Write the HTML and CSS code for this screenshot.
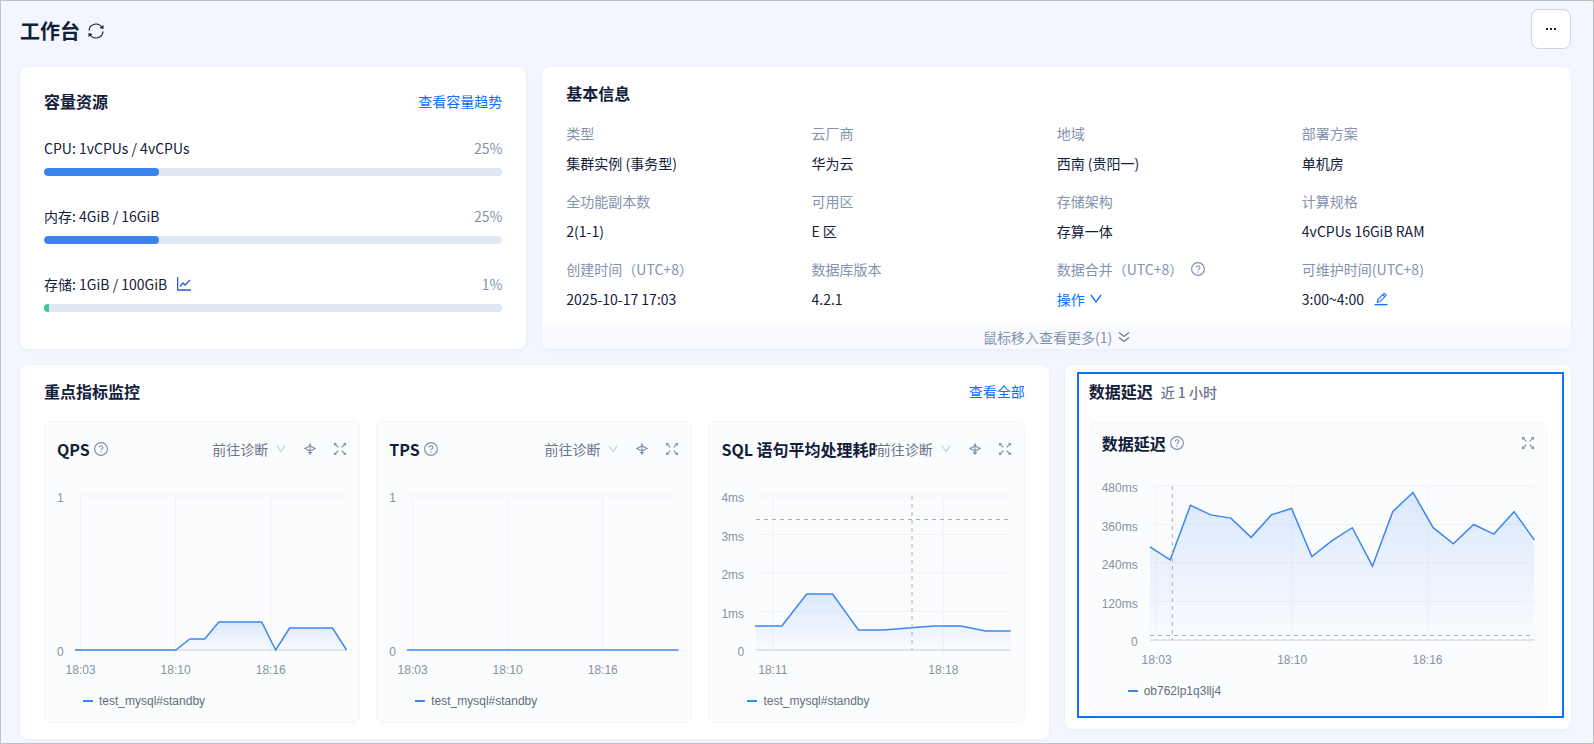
FILE: index.html
```
<!DOCTYPE html>
<html lang="zh-CN">
<head>
	<meta charset="UTF-8">
	<meta name="viewport" content="width=device-width, initial-scale=1">
	<title>工作台</title>
	<link rel="stylesheet" href="styles.css">
</head>
<body>
<svg class="sprite" aria-hidden="true">
	<symbol id="i-help" viewBox="0 0 14 14">
		<circle cx="7" cy="7" r="6.4" fill="none" stroke="currentColor" stroke-width="1.2"/>
		<path d="M5.1 5.6c0-1.1.8-1.8 1.9-1.8s1.9.7 1.9 1.7c0 .8-.5 1.2-1.1 1.5-.6.3-.8.6-.8 1.2" fill="none" stroke="currentColor" stroke-width="1.1"/>
		<circle cx="7" cy="10" r=".7" fill="currentColor"/>
	</symbol>
	<symbol id="i-down" viewBox="0 0 12 12">
		<path d="M1 2l5 7 5-7" fill="none" stroke="currentColor" stroke-width="1.3"/>
	</symbol>
	<symbol id="i-full" viewBox="0 0 12 12">
		<path d="M1 1l3.400 3.400M11 1L7.600 4.400M1 11l3.400-3.400M11 11L7.600 7.600" fill="none" stroke="currentColor" stroke-width="1.2"/>
		<path d="M0 0h3L0 3zM12 0v3L9 0zM0 12V9l3 3zM12 12H9l3-3z" fill="currentColor"/>
	</symbol>
	<symbol id="i-link" viewBox="0 0 12 12">
		<path d="M6 1v9M6 3L1 5.500 6 8l5-2.500z" fill="none" stroke="currentColor" stroke-width="1.2"/>
		<path d="M4.500 2.500L6 0l1.500 2.500zM3.500 9h5L6 12z" fill="currentColor"/>
	</symbol>
	<linearGradient id="area" x1="0" y1="0" x2="0" y2="1">
		<stop offset="0" stop-color="#3d86f0" stop-opacity=".17"/>
		<stop offset="1" stop-color="#3d86f0" stop-opacity=".01"/>
	</linearGradient>
</svg>

<main class="page">
	<header class="header">
		<h1>工作台</h1>
		<button class="icon-btn" type="button" aria-label="刷新">
			<svg width="16" height="16" viewBox="0 0 16 16">
				<path d="M1 7.500A7 7 0 0 1 14 4.500M15 8.500A7 7 0 0 1 2 11.500" fill="none" stroke="currentColor" stroke-width="1.2"/>
				<path d="M15.500 2v4l-4-1zM.5 14v-4l4 1z" fill="currentColor"/>
			</svg>
		</button>
		<button class="more" type="button" aria-label="更多">
			<svg width="12" height="4" viewBox="0 0 12 4"><path d="M1 1h2v2H1zM5 1h2v2H5zM9 1h2v2H9z" fill="currentColor"/></svg>
		</button>
	</header>

	<div class="grid">
		<section class="card capacity">
			<div class="card-head">
				<h2>容量资源</h2>
				<a href="#">查看容量趋势</a>
			</div>
			<div class="usage">
				<div class="usage-text"><span>CPU: 1vCPUs / 4vCPUs</span><span class="percent">25%</span></div>
				<div class="bar"><div class="fill" style="width:25%"></div></div>
			</div>
			<div class="usage">
				<div class="usage-text"><span>内存: 4GiB / 16GiB</span><span class="percent">25%</span></div>
				<div class="bar"><div class="fill" style="width:25%"></div></div>
			</div>
			<div class="usage">
				<div class="usage-text">
					<span>存储: 1GiB / 100GiB</span>
					<button class="icon-btn trend" type="button" aria-label="存储趋势">
						<svg width="14" height="14" viewBox="0 0 14 14"><path d="M.6 0v13H14M3 9.500l3-3.500 2 2 5-5" fill="none" stroke="currentColor" stroke-width="1.3"/></svg>
					</button>
					<span class="percent">1%</span>
				</div>
				<div class="bar"><div class="fill low" style="width:1%"></div></div>
			</div>
		</section>

		<section class="card info wide">
			<div class="card-head"><h2>基本信息</h2></div>
			<dl class="info-list">
				<div><dt>类型</dt><dd>集群实例 (事务型)</dd></div>
				<div><dt>云厂商</dt><dd>华为云</dd></div>
				<div><dt>地域</dt><dd>西南 (贵阳一)</dd></div>
				<div><dt>部署方案</dt><dd>单机房</dd></div>
				<div><dt>全功能副本数</dt><dd>2(1-1)</dd></div>
				<div><dt>可用区</dt><dd>E 区</dd></div>
				<div><dt>存储架构</dt><dd>存算一体</dd></div>
				<div><dt>计算规格</dt><dd>4vCPUs 16GiB RAM</dd></div>
				<div><dt>创建时间（UTC+8）</dt><dd>2025-10-17 17:03</dd></div>
				<div><dt>数据库版本</dt><dd>4.2.1</dd></div>
				<div>
					<dt>数据合并（UTC+8）<svg class="help" width="14" height="14"><use href="#i-help"/></svg></dt>
					<dd><button class="action" type="button">操作<svg width="12" height="12"><use href="#i-down"/></svg></button></dd>
				</div>
				<div>
					<dt>可维护时间(UTC+8)</dt>
					<dd>3:00~4:00
						<button class="icon-btn edit" type="button" aria-label="编辑可维护时间">
							<svg width="14" height="14" viewBox="0 0 14 14"><path d="M3.400 10.200l.5-2.700 6.200-6.300 2.100 2.100L6 9.600zM8.700 2.700l2 2" fill="none" stroke="currentColor" stroke-width="1.1"/><path d="M.5 12h13v1.300H.5z" fill="currentColor"/></svg>
						</button>
					</dd>
				</div>
			</dl>
			<button class="expand" type="button">鼠标移入查看更多(1)
				<svg width="12" height="12" viewBox="0 0 12 12"><path d="M1 1.500l5 4 5-4M1 6.500l5 4 5-4" fill="none" stroke="currentColor" stroke-width="1.2"/></svg>
			</button>
		</section>

		<section class="card wide">
			<div class="card-head">
				<h2>重点指标监控</h2>
				<a href="#">查看全部</a>
			</div>
			<div class="panels">
				<article class="panel">
					<div class="panel-head">
						<h3>QPS<svg class="help" width="14" height="14"><use href="#i-help"/></svg></h3>
						<select aria-label="QPS 前往诊断"><option>前往诊断</option></select>
						<svg class="arrow" width="10" height="10"><use href="#i-down"/></svg>
						<button class="icon-btn" type="button" aria-label="联动"><svg width="12" height="12"><use href="#i-link"/></svg></button>
						<button class="icon-btn" type="button" aria-label="全屏"><svg width="12" height="12"><use href="#i-full"/></svg></button>
					</div>
					<div class="chart">
						<div class="y-axis"><span>1</span><span>0</span></div>
						<svg class="plot">
							<g class="gridline">
								<line x1="0" x2="100%" y1="6" y2="6"/>
								<line x1="1.7%" x2="1.7%" y1="6" y2="164"/>
								<line x1="36.8%" x2="36.8%" y1="6" y2="164"/>
								<line x1="72%" x2="72%" y1="6" y2="164"/>
							</g>
							<line class="base" x1="0" x2="100%" y1="160" y2="160"/>
							<svg y="6" width="100%" height="154" viewBox="0 0 271 154" preserveAspectRatio="none" overflow="visible">
								<path class="area" d="M100 154L114 143H129L143 126H186L200 154L214 132H257L271 154z"/>
								<path class="line" d="M-1 154H100L114 143H129L143 126H186L200 154L214 132H257L271 154"/>
							</svg>
							<text x="1.7%" y="184">18:03</text>
							<text x="36.8%" y="184">18:10</text>
							<text x="72%" y="184">18:16</text>
						</svg>
					</div>
					<div class="legend">test_mysql#standby</div>
				</article>

				<article class="panel">
					<div class="panel-head">
						<h3>TPS<svg class="help" width="14" height="14"><use href="#i-help"/></svg></h3>
						<select aria-label="TPS 前往诊断"><option>前往诊断</option></select>
						<svg class="arrow" width="10" height="10"><use href="#i-down"/></svg>
						<button class="icon-btn" type="button" aria-label="联动"><svg width="12" height="12"><use href="#i-link"/></svg></button>
						<button class="icon-btn" type="button" aria-label="全屏"><svg width="12" height="12"><use href="#i-full"/></svg></button>
					</div>
					<div class="chart">
						<div class="y-axis"><span>1</span><span>0</span></div>
						<svg class="plot">
							<g class="gridline">
								<line x1="0" x2="100%" y1="6" y2="6"/>
								<line x1="1.7%" x2="1.7%" y1="6" y2="164"/>
								<line x1="36.8%" x2="36.8%" y1="6" y2="164"/>
								<line x1="72%" x2="72%" y1="6" y2="164"/>
							</g>
							<svg y="6" width="100%" height="154" viewBox="0 0 271 154" preserveAspectRatio="none" overflow="visible">
								<path class="line" d="M-1 154H271"/>
							</svg>
							<text x="1.7%" y="184">18:03</text>
							<text x="36.8%" y="184">18:10</text>
							<text x="72%" y="184">18:16</text>
						</svg>
					</div>
					<div class="legend">test_mysql#standby</div>
				</article>

				<article class="panel">
					<div class="panel-head">
						<h3>SQL 语句平均处理耗时<svg class="help" width="14" height="14"><use href="#i-help"/></svg></h3>
						<select aria-label="SQL 语句平均处理耗时 前往诊断"><option>前往诊断</option></select>
						<svg class="arrow" width="10" height="10"><use href="#i-down"/></svg>
						<button class="icon-btn" type="button" aria-label="联动"><svg width="12" height="12"><use href="#i-link"/></svg></button>
						<button class="icon-btn" type="button" aria-label="全屏"><svg width="12" height="12"><use href="#i-full"/></svg></button>
					</div>
					<div class="chart">
						<div class="y-axis"><span>4ms</span><span>3ms</span><span>2ms</span><span>1ms</span><span>0</span></div>
						<svg class="plot">
							<g class="gridline">
								<line x1="0" x2="100%" y1="6" y2="6"/>
								<line x1="0" x2="100%" y1="44.5" y2="44.5"/>
								<line x1="0" x2="100%" y1="83" y2="83"/>
								<line x1="0" x2="100%" y1="121.5" y2="121.5"/>
								<line x1="6.6%" x2="6.6%" y1="6" y2="164"/>
								<line x1="73.6%" x2="73.6%" y1="6" y2="164"/>
							</g>
							<line class="base" x1="0" x2="100%" y1="160" y2="160"/>
							<svg y="6" width="100%" height="154" viewBox="0 0 256 154" preserveAspectRatio="none" overflow="visible">
								<path class="area" d="M0 130H26L51 98H77L103 134H128L179 130H206L231 135H256V154H0z"/>
								<path class="line" d="M-1 130H26L51 98H77L103 134H128L179 130H206L231 135H256"/>
							</svg>
							<line class="cross" x1="0" x2="100%" y1="29.5" y2="29.5"/>
							<line class="cross" x1="61.3%" x2="61.3%" y1="6" y2="160"/>
							<text x="6.6%" y="184">18:11</text>
							<text x="73.6%" y="184">18:18</text>
						</svg>
					</div>
					<div class="legend">test_mysql#standby</div>
				</article>
			</div>
		</section>

		<section class="card delay">
			<div class="card-head"><h2>数据延迟<small>近 1 小时</small></h2></div>
			<article class="panel compact">
				<div class="panel-head">
					<h3>数据延迟<svg class="help" width="14" height="14"><use href="#i-help"/></svg></h3>
					<button class="icon-btn" type="button" aria-label="全屏"><svg width="12" height="12"><use href="#i-full"/></svg></button>
				</div>
				<div class="chart">
					<div class="y-axis"><span>480ms</span><span>360ms</span><span>240ms</span><span>120ms</span><span>0</span></div>
					<svg class="plot">
						<g class="gridline">
							<line x1="0" x2="100%" y1="6" y2="6"/>
							<line x1="0" x2="100%" y1="44.5" y2="44.5"/>
							<line x1="0" x2="100%" y1="83" y2="83"/>
							<line x1="0" x2="100%" y1="121.5" y2="121.5"/>
							<line x1="1.7%" x2="1.7%" y1="6" y2="164"/>
							<line x1="37%" x2="37%" y1="6" y2="164"/>
							<line x1="72.2%" x2="72.2%" y1="6" y2="164"/>
						</g>
						<line class="base" x1="0" x2="100%" y1="160" y2="160"/>
						<!-- y is milliseconds below 480 -->
						<svg y="6" width="100%" height="154" viewBox="0 0 190 480" preserveAspectRatio="none" overflow="visible">
							<path class="area" d="M0 190L10 230L20 60L30 90L40 100L50 160L60 90L70 70L80 220L90 170L100 130L110 250L120 80L130 20L140 130L150 180L160 120L170 150L180 80L190 168V480H0z"/>
							<path class="line" d="M0 190L10 230L20 60L30 90L40 100L50 160L60 90L70 70L80 220L90 170L100 130L110 250L120 80L130 20L140 130L150 180L160 120L170 150L180 80L190 168"/>
						</svg>
						<line class="cross" x1="0" x2="100%" y1="155.5" y2="155.5"/>
						<line class="cross" x1="5.8%" x2="5.8%" y1="6" y2="160"/>
						<text x="1.7%" y="184">18:03</text>
						<text x="37%" y="184">18:10</text>
						<text x="72.2%" y="184">18:16</text>
					</svg>
				</div>
				<div class="legend">ob762lp1q3llj4</div>
			</article>
		</section>
	</div>
</main>
</body>
</html>
```
FILE: styles.css
```
*{
	box-sizing: border-box;
}
body{
	margin: 0;
	background: #f3f6fe;
	color: #132039;
	font: 14px/20px "Noto Sans CJK SC", sans-serif;
}
h1,h2,h3,dl,dd{
	margin: 0;
}
svg{
	display: block;
	flex: none;
}
a{
	color: #0d6eff;
	text-decoration: none;
}
button,select{
	font: inherit;
	color: inherit;
	border: 0;
	padding: 0;
	margin: 0;
	background: none;
	cursor: pointer;
}
.sprite{
	position: absolute;
	width: 0;
	height: 0;
}
.page{
	min-height: 100vh;
	border: 1px solid #c0c0c0;
	padding: 8px 22px 3px 19px;
}

/* header */
.header{
	display: flex;
	align-items: center;
	gap: 8px;
	margin-bottom: 14px;
}
.header h1{
	font-size: 20px;
	line-height: 44px;
	font-weight: 600;
}
.more{
	display: flex;
	align-items: center;
	justify-content: center;
	align-self: flex-start;
	width: 40px;
	height: 40px;
	margin-left: auto;
	border: 1px solid #cdd5e4;
	border-radius: 8px;
	background: #fff;
}

/* cards */
.grid{
	display: grid;
	grid-template-columns: repeat(3, minmax(0, 1fr));
	gap: 16px;
	align-items: start;
}
.wide{
	grid-column: span 2;
}
.card{
	padding: 16px 24px;
	border-radius: 8px;
	background: #fff;
	box-shadow: 0 1px 4px rgba(19,32,57,.04);
}
.card-head{
	display: flex;
	justify-content: space-between;
	margin-bottom: 20px;
}
.card-head h2{
	font-size: 16px;
	font-weight: 600;
}
.card-head small{
	margin-left: 8px;
	font-size: 14px;
	font-weight: 500;
	color: #6b7489;
}
.icon-btn{
	display: flex;
}

/* capacity */
.capacity{
	align-self: stretch;
	padding-top: 24px;
}
.capacity .card-head{
	margin-bottom: 27px;
}
.usage{
	margin-bottom: 30px;
}
.usage:last-child{
	margin-bottom: 0;
}
.usage-text{
	display: flex;
	align-items: center;
	margin-bottom: 10px;
}
.percent{
	margin-left: auto;
	color: #8592ad;
}
.trend{
	margin-left: 10px;
	color: #2f54eb;
}
.bar{
	height: 8px;
	border-radius: 4px;
	background: #e0e7f2;
	overflow: hidden;
}
.fill{
	height: 100%;
	border-radius: 4px;
	background: #3b82ec;
}
.fill.low{
	border-radius: 0;
	background: #3fc99a;
}

/* basic info */
.info{
	padding-bottom: 0;
}
.info-list{
	display: grid;
	grid-template-columns: repeat(4, minmax(0, 1fr));
	row-gap: 18px;
	margin-bottom: 18px;
}
.info-list dt,.info-list dd{
	display: flex;
	align-items: center;
	white-space: nowrap;
}
.info-list dt{
	margin-bottom: 10px;
	color: #8592ad;
}
.info-list .help{
	margin-left: 8px;
}
.action{
	display: flex;
	align-items: center;
	gap: 5px;
	color: #0d6eff;
}
.edit{
	margin-left: 10px;
	color: #0d6eff;
}
.expand{
	display: flex;
	align-items: center;
	justify-content: center;
	gap: 6px;
	width: calc(100% + 48px);
	margin: 0 -24px;
	padding-bottom: 2px;
	border-radius: 0 0 8px 8px;
	background: #f8faff;
	color: #8592ad;
}
.expand svg{
	color: #6b7894;
}

/* metric panels */
.panels{
	display: grid;
	grid-template-columns: repeat(3, minmax(0, 1fr));
	gap: 16px;
}
.panel{
	padding: 16px 13px 13px 12px;
	border: 1px solid #f2f5fc;
	border-radius: 8px;
	background: #fbfcfe;
}
.panel-head{
	display: flex;
	align-items: center;
	height: 22px;
	margin-bottom: 30px;
	color: #8592ad;
}
.panel-head h3{
	display: flex;
	align-items: center;
	gap: 4px;
	flex: 1;
	min-width: 0;
	overflow: hidden;
	white-space: nowrap;
	font-size: 16px;
	line-height: 22px;
	font-weight: 600;
	color: #132039;
}
.panel-head .help{
	color: #8592ad;
}
.panel-head select{
	appearance: none;
	color: #6b7489;
}
.panel-head .arrow{
	margin-left: 8px;
	color: #c3cddf;
}
.panel-head .arrow ~ .icon-btn{
	margin-left: 18px;
}
.compact{
	padding-top: 9px;
	padding-right: 12px;
}
.compact .panel-head{
	margin-bottom: 26px;
}

/* charts */
.chart,.legend{
	font: 12px/16px "Liberation Sans", Arial, sans-serif;
}
.chart{
	display: flex;
	gap: 12px;
	color: #8a91a0;
}
.y-axis{
	display: flex;
	flex-direction: column;
	justify-content: space-between;
	height: 170px;
	text-align: right;
}
.plot{
	flex: 1;
	min-width: 0;
	height: 190px;
	overflow: visible;
}
.plot text{
	fill: #8a91a0;
	text-anchor: middle;
}
.gridline{
	stroke: #f1f2f6;
}
.base{
	stroke: #e2e4ea;
	stroke-width: 2px;
}
.cross{
	stroke: #a9acb3;
	stroke-dasharray: 4;
}
.area{
	fill: url(#area);
}
.line{
	fill: none;
	stroke: #3d86f0;
	stroke-width: 1.5px;
	vector-effect: non-scaling-stroke;
}
.legend{
	display: flex;
	align-items: center;
	gap: 6px;
	margin-top: 13px;
	padding-left: 26px;
	color: #666d7b;
}
.legend::before{
	content: "";
	width: 10px;
	height: 2px;
	background: #3d86f0;
}

/* highlight frame over the delay card */
.delay{
	position: relative;
}
.delay::after{
	content: "";
	position: absolute;
	top: 7px;
	right: 7px;
	bottom: 11px;
	left: 12px;
	border: 2px solid #0d6eff;
	pointer-events: none;
}
```
